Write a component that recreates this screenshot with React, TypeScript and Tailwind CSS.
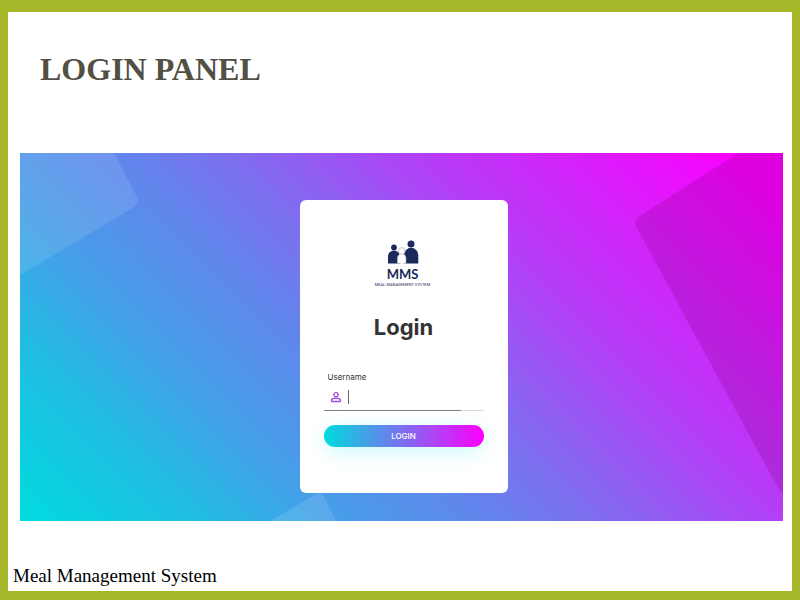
import { useState } from "react";

function FamilyLogo() {
  return (
    <div className="flex flex-col items-center pr-0.5 font-['Lato',sans-serif] text-[#1b2a5c]">
      <svg viewBox="0 0 32 24" className="h-6 w-8" aria-hidden="true">
        <g fill="#1b2a5c">
          <circle cx="7" cy="7.500" r="2.900" />
          <path d="M1 23.500v-7a5.800 5.800 0 0 1 12 0v7z" />
          <circle cx="24" cy="4" r="3.500" />
          <path d="M17 23.500v-8.500a7 7 0 0 1 14.300 0v8.500z" />
        </g>
        <path
          d="M10.500 23.300v-5.300a4.200 4.200 0 0 1 8.400 0v5.300z"
          fill="#fff"
          stroke="#c9cdd8"
          strokeWidth="0.500"
        />
        <circle cx="14.700" cy="10.800" r="3.300" fill="#fff" stroke="#b3b8c8" strokeWidth="0.800" />
      </svg>
      <span className="mt-0.5 text-[13px] leading-4 font-bold">MMS</span>
      <span className="font-['Roboto',sans-serif] text-[4px] leading-[5px] whitespace-nowrap">
        MEAL MANAGEMENT SYSTEM
      </span>
    </div>
  );
}

function UserIcon() {
  return (
    <svg
      viewBox="0 0 24 24"
      className="ml-1.5 size-3 shrink-0"
      fill="none"
      stroke="#a34fd6"
      strokeWidth="2.600"
      strokeLinejoin="round"
      aria-hidden="true"
    >
      <circle cx="12" cy="7.500" r="4.200" />
      <path d="M3 21v-2.500c0-2.500 4.500-4 9-4s9 1.500 9 4V21z" />
    </svg>
  );
}

function Backdrop() {
  return (
    <svg
      viewBox="0 0 763 368"
      preserveAspectRatio="none"
      className="absolute inset-0 size-full"
      aria-hidden="true"
    >
      <path d="M0 0H94L117 44Q120 50 114 54L0 122Z" fill="#fff" fillOpacity="0.110" />
      <path
        d="M718 0H763V340Q760 339 758 335L617 75Q613 67 620 63Z"
        fill="#780078"
        fillOpacity="0.220"
      />
      <path d="M250 368L296 341Q301 338 304 344L316 368Z" fill="#fff" fillOpacity="0.120" />
    </svg>
  );
}

export default function App() {
  const [username, setUsername] = useState("");

  return (
    <main className="flex min-h-screen flex-col border-x-8 border-t-12 border-b-9 border-[#a5b728] bg-white">
      <h1 className="px-8 pt-[37px] font-['Liberation_Serif',serif] text-[32px] leading-10 font-bold text-[#524f43]">
        LOGIN PANEL
      </h1>

      <section className="relative mt-16 mr-[9px] ml-3 flex justify-center bg-[linear-gradient(45deg,#00dbde,#21bde3_16%,#43a0e8_27%,#6186ec_41%,#7e6eef_51%,#b53df7_68%,#fc00ff_96%)] pt-[47px] pb-7 pl-1">
        <Backdrop />
        <form
          className="relative flex w-52 flex-col rounded-md bg-white px-6 pt-10 pb-[46px] font-['Inter',sans-serif]"
          onSubmit={(event) => event.preventDefault()}
        >
          <FamilyLogo />
          <h2 className="mt-[22px] text-center text-[22px] leading-9 font-bold text-[#333]">
            Login
          </h2>
          <label htmlFor="username" className="mt-[26px] pl-1 text-[8px] leading-3 text-[#333]">
            Username
          </label>
          <div className="relative flex h-7 items-center border-b border-[#d9d9d9]">
            <UserIcon />
            <span className="ml-1.5 h-3.5 w-px bg-[#666]" />
            <input
              id="username"
              type="text"
              value={username}
              onChange={(event) => setUsername(event.target.value)}
              className="min-w-0 flex-1 bg-transparent text-[8px] text-[#333] outline-none"
            />
            <span className="absolute -bottom-px left-0 h-px w-[137px] bg-[#7f7f7f]" />
          </div>
          <button
            type="submit"
            className="mt-3.5 h-[22px] rounded-full bg-[linear-gradient(90deg,#00dbde,#fc00ff)] text-[8px] leading-3 font-medium text-white shadow-[0_5px_20px_rgba(0,219,222,0.2)]"
          >
            LOGIN
          </button>
        </form>
      </section>

      <footer className="mt-auto px-[5px] pb-[3px] font-['Liberation_Serif',serif] text-[19px] leading-6 text-black">
        Meal Management System
      </footer>
    </main>
  );
}
